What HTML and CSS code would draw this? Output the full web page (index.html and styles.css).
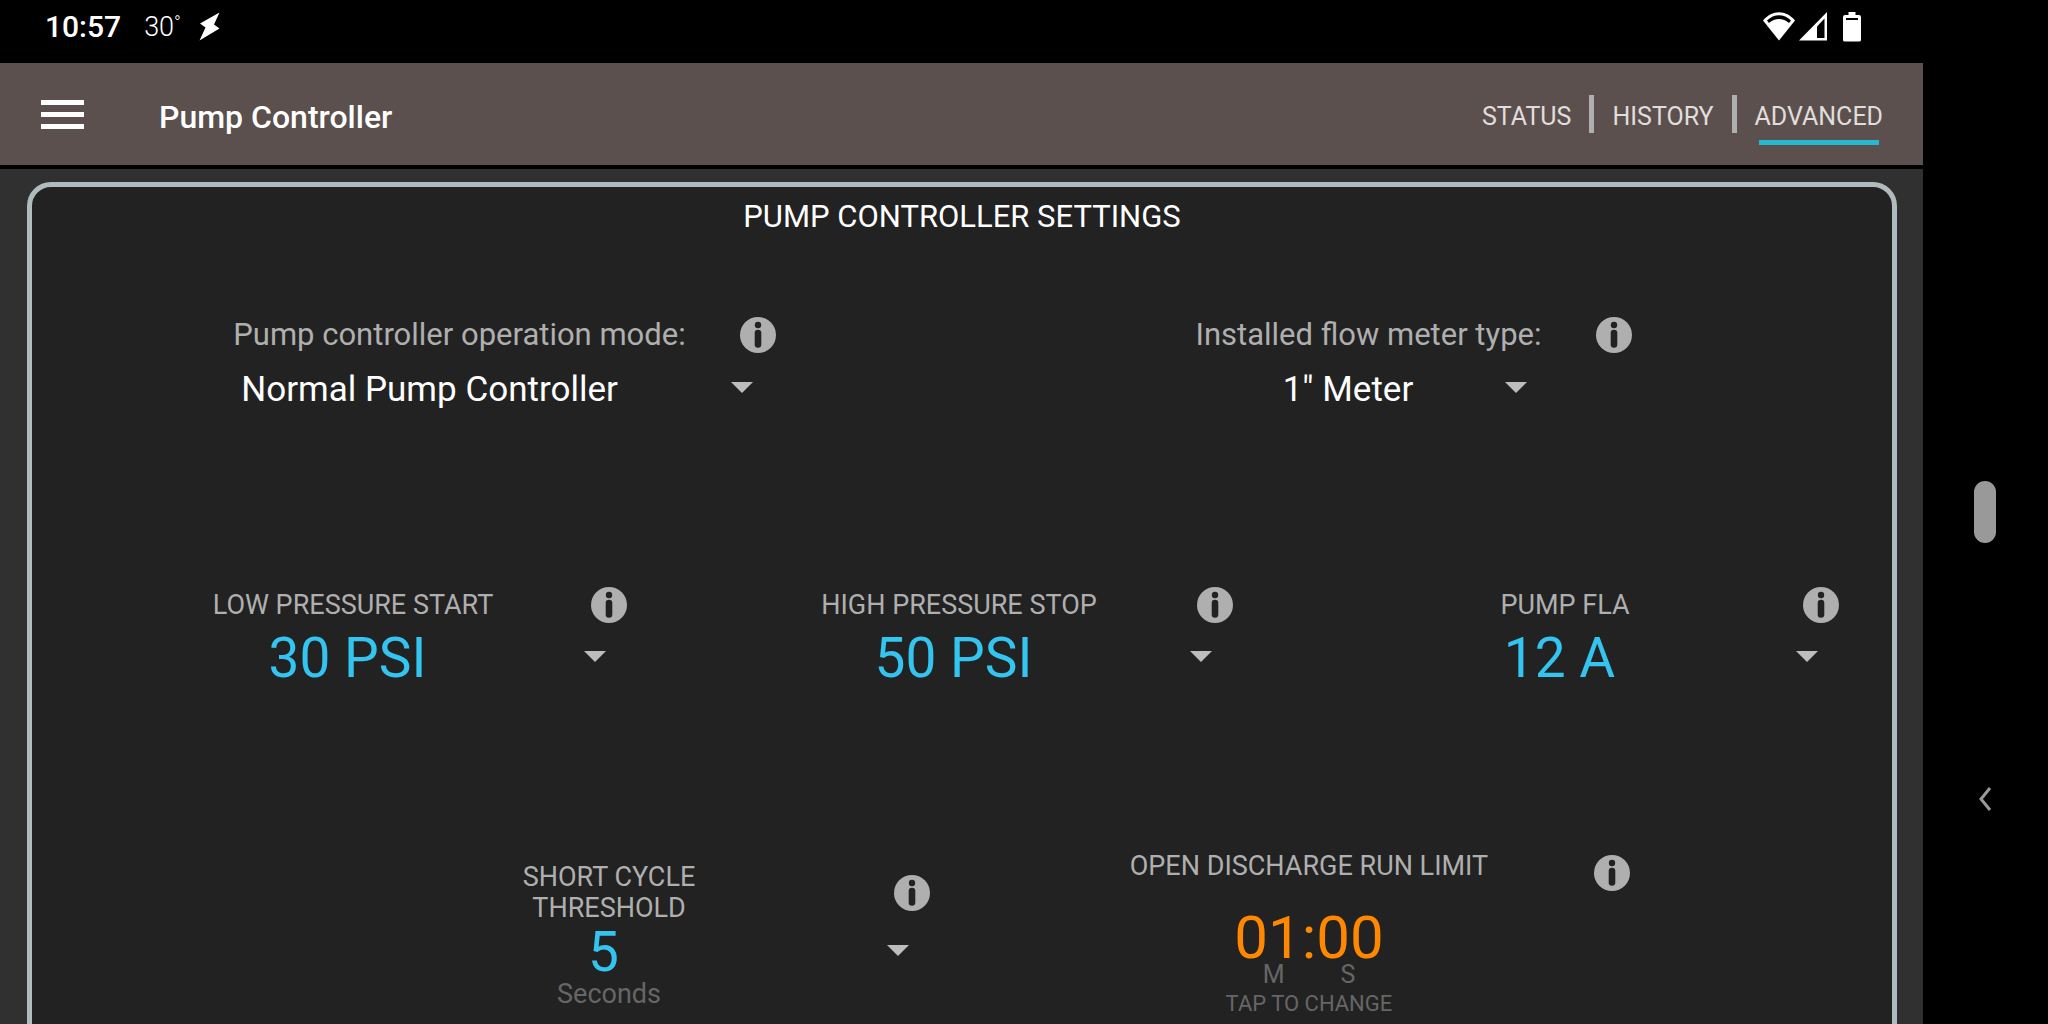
FILE: index.html
```html
<!DOCTYPE html>
<html lang="en">
<head>
  <meta charset="UTF-8">
  <meta name="viewport" content="width=device-width, initial-scale=1.0">
  <title>Pump Controller</title>
  <link rel="stylesheet" href="styles.css">
</head>
<body>
  <!-- info icon, reused by every setting -->
  <svg class="defs" width="0" height="0" aria-hidden="true">
    <symbol id="info" viewBox="0 0 36 36">
      <circle cx="18" cy="18" r="18" fill="#afafaf"/>
      <circle cx="18" cy="8" r="3.200" fill="#222"/>
      <rect x="14.700" y="12.700" width="6.600" height="18" rx="3.300" fill="#222"/>
    </symbol>
  </svg>

  <div class="app">
    <div class="status-bar">
      <span class="clock">10:57</span>
      <span class="temp">30<span class="degree">°</span></span>
      <svg class="bolt" width="22" height="30" viewBox="0 0 22 30"><path d="M20.500 0.500L1 11.500L6.500 15.500L0.500 28.500L20.500 16.500L15 12.500Z" fill="#fff"/></svg>
      <div class="status-icons">
        <svg width="32" height="29" viewBox="0 0 32 29">
          <path d="M16 28.500L0 8.500C9 -2.500 23 -2.500 32 8.500Z" fill="#fff"/>
          <path d="M4 8.500C11 1.500 21 1.500 28 8.500L26 11C20 5.500 12 5.500 6 11Z" fill="#000"/>
        </svg>
        <svg class="signal" width="28" height="29" viewBox="0 0 28 29">
          <path d="M28 0V28.500H0Z" fill="#fff"/>
          <path d="M25.500 6.500V26H18V14.500Z" fill="#000"/>
        </svg>
        <svg width="18" height="30" viewBox="0 0 18 30">
          <path d="M5.500 0H12.500V3H16Q18 3 18 5V28Q18 29.500 16 29.500H2Q0 29.500 0 28V5Q0 3 2 3H5.500Z" fill="#fff"/>
          <path d="M3 6H15V8H3Z" fill="#000"/>
        </svg>
      </div>
    </div>

    <header>
      <button class="menu" aria-label="Menu"><span></span><span></span><span></span></button>
      <h1>Pump Controller</h1>
      <nav>
        <a href="#status">STATUS</a>
        <a href="#history">HISTORY</a>
        <a href="#advanced" class="active">ADVANCED</a>
      </nav>
    </header>

    <main>
      <section class="panel">
        <h2>PUMP CONTROLLER SETTINGS</h2>

        <div class="row modes">
          <div class="mode">
            <label for="op-mode">Pump controller operation mode:</label>
            <button class="info" aria-label="About operation mode"><svg><use href="#info"/></svg></button>
            <div class="spinner operation">
              <select id="op-mode"><option>Normal Pump Controller</option></select>
            </div>
          </div>
          <div class="mode">
            <label for="meter">Installed flow meter type:</label>
            <button class="info" aria-label="About flow meter type"><svg><use href="#info"/></svg></button>
            <div class="spinner meter">
              <select id="meter"><option>1" Meter</option></select>
            </div>
          </div>
        </div>

        <div class="row values">
          <div class="field">
            <label for="low">LOW PRESSURE START</label>
            <button class="info" aria-label="About low pressure start"><svg><use href="#info"/></svg></button>
            <div class="spinner">
              <select id="low"><option>30 PSI</option></select>
            </div>
          </div>
          <div class="field">
            <label for="high">HIGH PRESSURE STOP</label>
            <button class="info" aria-label="About high pressure stop"><svg><use href="#info"/></svg></button>
            <div class="spinner">
              <select id="high"><option>50 PSI</option></select>
            </div>
          </div>
          <div class="field">
            <label for="fla">PUMP FLA</label>
            <button class="info" aria-label="About pump FLA"><svg><use href="#info"/></svg></button>
            <div class="spinner">
              <select id="fla"><option>12 A</option></select>
            </div>
          </div>
        </div>

        <div class="row limits">
          <div class="field cycle">
            <label for="cycle">SHORT CYCLE<br>THRESHOLD</label>
            <button class="info" aria-label="About short cycle threshold"><svg><use href="#info"/></svg></button>
            <div class="spinner">
              <select id="cycle"><option>5</option></select>
            </div>
            <div class="unit">Seconds</div>
          </div>
          <div class="field discharge">
            <label for="run-limit">OPEN DISCHARGE RUN LIMIT</label>
            <button class="info" aria-label="About open discharge run limit"><svg><use href="#info"/></svg></button>
            <button class="time" id="run-limit">
              <span class="digits">01:00</span>
              <span class="ms"><span>M</span><span>S</span></span>
              <span class="hint">TAP TO CHANGE</span>
            </button>
          </div>
        </div>
      </section>
    </main>
  </div>

  <div class="system-nav">
    <button class="home" aria-label="Home"></button>
    <button class="back" aria-label="Back">
      <svg width="14" height="26" viewBox="0 0 14 26"><path d="M12 2L3 13L12 24" fill="none" stroke="#999" stroke-width="3"/></svg>
    </button>
  </div>
</body>
</html>
```
FILE: styles.css
```css
* {
  box-sizing: border-box;
}
body {
  margin: 0;
  height: 100vh;
  display: flex;
  overflow: hidden;
  background-color: #000;
  color: #afafaf;
  font-family: Roboto, sans-serif;
}
button, select {
  font-family: inherit;
  color: inherit;
  background: none;
  border: none;
  padding: 0;
  margin: 0;
}
svg {
  display: block;
}
.defs {
  position: absolute;
}
.app {
  flex: 1;
  display: flex;
  flex-direction: column;
  min-width: 0;
}

/* Status bar */
.status-bar {
  flex: none;
  height: 63px;
  display: flex;
  align-items: flex-start;
  padding: 12px 62px 0 45px;
  color: #fff;
}
.clock {
  font-size: 30px;
  line-height: 30px;
  font-weight: 500;
}
.temp {
  display: flex;
  margin-left: 23px;
  font-size: 27px;
  line-height: 30px;
  font-weight: 300;
}
.degree {
  font-size: 18px;
  line-height: 22px;
}
.bolt {
  margin-left: 18px;
}
.status-icons {
  display: flex;
  gap: 4px;
  margin-left: auto;
}
.signal {
  margin-right: 12px;
}

/* App bar */
header {
  flex: none;
  height: 106px;
  display: flex;
  align-items: center;
  padding: 0 40px 0 41px;
  background-color: #5b504d;
  border-bottom: 4px solid #000;
}
.menu {
  width: 43px;
  display: flex;
  flex-direction: column;
  gap: 7px;
}
.menu span {
  height: 5px;
  background-color: #fff;
}
h1 {
  margin: 6px 0 0 75px;
  color: #fff;
  font-size: 32px;
  line-height: 38px;
  font-weight: 500;
}
nav {
  display: flex;
  align-items: center;
  margin-left: auto;
}
nav a {
  position: relative;
  padding-top: 6px;
  color: #e0dedc;
  font-size: 25px;
  line-height: 32px;
  text-decoration: none;
}
nav a + a {
  margin-left: 18px;
  padding-left: 18px;
  border-left: 5px solid #afafaf;
}
nav .active::after {
  content: "";
  position: absolute;
  left: 22px;
  right: 4px;
  bottom: -12px;
  height: 5px;
  background-color: #26b8d1;
}

/* Settings panel */
main {
  flex: 1;
  min-height: 0;
  overflow: hidden;
  padding: 13px 26px 13px 27px;
  background-color: #303030;
}
.panel {
  border: 5px solid #afbbbd;
  border-radius: 24px;
  padding: 10px 18px 80px;
  background-color: #222;
}
h2 {
  margin: 0 0 79px;
  color: #fff;
  font-size: 31px;
  line-height: 40px;
  font-weight: 400;
  text-align: center;
}
.row {
  display: grid;
  padding-right: 6px;
}
.info svg {
  width: 36px;
  height: 36px;
}

/* Drop-downs */
.spinner {
  position: relative;
}
.spinner::after {
  content: "";
  position: absolute;
  right: 5px;
  top: 50%;
  margin-top: -7px;
  border: 11px solid transparent;
  border-top-color: #bdbdbd;
  border-bottom: none;
  pointer-events: none;
}
.spinner select {
  display: block;
  width: 100%;
  padding-right: 31px;
  appearance: none;
  text-align: center;
  text-align-last: center;
}

/* Operation mode and meter type */
.modes {
  grid-template-columns: 1fr 1fr;
  justify-items: center;
}
.mode {
  display: grid;
  grid-template-columns: auto 36px;
  column-gap: 54px;
  row-gap: 13px;
}
.mode label {
  font-size: 31px;
  line-height: 38px;
}
.mode .spinner {
  grid-column: 1 / 3;
}
.mode select {
  height: 44px;
  color: #fff;
  font-size: 35px;
}
.operation {
  margin-right: 18px;
}
.operation select {
  padding-left: 8px;
  text-align: left;
  text-align-last: left;
}
.meter {
  margin-right: 100px;
}

/* Value fields */
.field {
  display: grid;
  grid-template-columns: 65px 1fr 65px;
  align-items: center;
  align-content: start;
}
.field label {
  grid-column: 1 / 4;
  grid-row: 1;
  font-size: 27px;
  line-height: 36px;
  text-align: center;
}
.field .info {
  grid-column: 3;
  grid-row: 1;
  justify-self: start;
}
.field .spinner {
  grid-column: 2 / 4;
  margin-right: 45px;
}
.field select {
  height: 64px;
  color: #33c4f0;
  font-size: 55px;
}
.values {
  grid-template-columns: repeat(3, 1fr);
  margin-top: 176px;
}
.values .spinner {
  margin-top: 3px;
}
.limits {
  grid-template-columns: repeat(2, 38.5%);
  justify-content: center;
  margin-top: 158px;
}
.cycle {
  padding-top: 14px;
}
.cycle label {
  line-height: 31px;
}
.cycle .spinner {
  margin-top: -4px;
  margin-bottom: -4px;
}
.unit {
  grid-column: 2;
  color: #666;
  font-size: 27px;
  line-height: 28px;
  text-align: center;
}
.discharge {
  grid-template-rows: 50px auto;
}
.discharge label {
  align-self: start;
}
.time {
  grid-column: 2;
  justify-self: center;
  margin-top: 16px;
  color: #666;
}
.time > span {
  display: block;
}
.time .digits {
  color: #ff8800;
  font-size: 60px;
  line-height: 48px;
}
.time .ms {
  display: flex;
  justify-content: center;
  gap: 56px;
  font-size: 25px;
  line-height: 26px;
}
.hint {
  font-size: 22px;
  line-height: 32px;
}

/* System navigation */
.system-nav {
  flex: none;
  width: 125px;
  padding-right: 2px;
  display: grid;
  grid-template-rows: repeat(3, 28%);
  align-content: center;
  place-items: center;
}
.home {
  grid-row: 2;
  width: 22px;
  height: 62px;
  border-radius: 11px;
  background-color: #999;
}
.back {
  grid-row: 3;
}
```
